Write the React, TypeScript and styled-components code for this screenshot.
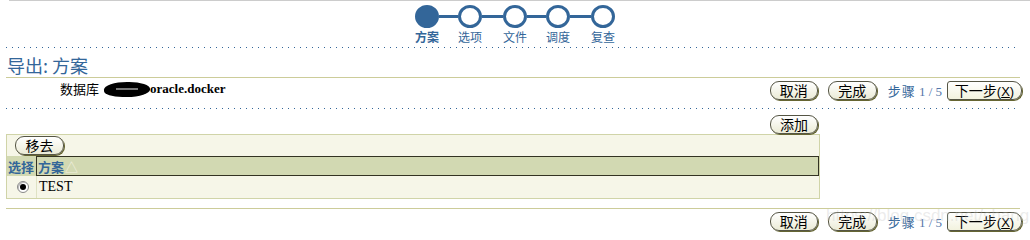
import React from 'react';
import styled, { createGlobalStyle } from 'styled-components';

const GlobalStyle = createGlobalStyle`
  body {
    margin: 0;
    background: #ffffff;
    font-family: "Liberation Serif", "Noto Sans CJK SC", serif;
    font-size: 13px;
    color: #000000;
  }
`;

const Page = styled.div`
  width: 1030px;
  height: 240px;
  position: relative;
  overflow: hidden;
`;

const TopRule = styled.div`
  height: 1px;
  margin-left: 9px;
  background: #cccccc;
`;

const Train = styled.div`
  display: flex;
  justify-content: center;
  padding-top: 4px;
  height: 43px;
  box-sizing: border-box;
`;

const Step = styled.div`
  display: flex;
  flex-direction: column;
  align-items: center;
  width: 24px;
`;

const Dot = styled.div<{ $active?: boolean }>`
  width: 24px;
  height: 24px;
  box-sizing: border-box;
  border-radius: 50%;
  border: 3px solid #336699;
  background: ${p => (p.$active ? '#336699' : '#ffffff')};
`;

const StepLabel = styled.div<{ $active?: boolean }>`
  margin-top: 2px;
  white-space: nowrap;
  font-family: "Noto Sans CJK SC", sans-serif;
  font-size: 12px;
  line-height: 14px;
  color: #336699;
  font-weight: ${p => (p.$active ? 700 : 400)};
`;

const Link = styled.div<{ $w: number }>`
  width: ${p => p.$w}px;
  height: 3px;
  margin-top: 10px;
  background: #336699;
`;

const Dotted = styled.div`
  height: 1px;
  margin: 3px 10px 0 6px;
  background-image: linear-gradient(to right, #336699 1px, transparent 1px);
  background-size: 6px 1px;
  background-repeat: repeat-x;
`;

const Title = styled.h1`
  margin: 6px 0 0 7px;
  font-family: "Noto Sans CJK SC", sans-serif;
  font-size: 18px;
  line-height: 23px;
  font-weight: 400;
  color: #336699;
`;

const BeigeRule = styled.div`
  height: 1px;
  margin: 0 10px 0 6px;
  background: #cccc99;
`;

const InfoRow = styled.div`
  display: flex;
  justify-content: space-between;
  align-items: flex-start;
  height: 27px;
  padding-right: 8px;
`;

const DbInfo = styled.div`
  display: flex;
  align-items: center;
  padding: 3px 0 0 60px;
  font-size: 13px;
  line-height: 16px;
`;

const DbLabel = styled.span`
  font-family: "Noto Sans CJK SC", sans-serif;
  font-size: 13px;
  margin-right: 5px;
`;

const Blot = styled.span`
  display: inline-flex;
  align-items: center;
  justify-content: center;
  width: 46px;
  height: 15px;
  border-radius: 50% 45% 50% 40%;
  background: #000000;
`;

const BlotMark = styled.span`
  width: 22px;
  height: 2px;
  background: #777777;
`;

const Host = styled.b`
  font-family: "Liberation Serif", serif;
  font-size: 13px;
`;

const Actions = styled.div`
  display: flex;
  align-items: center;
  padding-top: 3px;
`;

const Button = styled.button<{ $w: number; $square?: boolean }>`
  width: ${p => p.$w}px;
  height: 19px;
  box-sizing: border-box;
  padding: 0;
  margin: 0;
  border: 1px solid #555544;
  border-radius: ${p => (p.$square ? '3px 9px 9px 3px' : '9px')};
  box-shadow: 1px 1px 0 #666633;
  background: ${p =>
    p.$square ? 'linear-gradient(#ffffff, #f2f2de)' : 'linear-gradient(#ffffff, #ebebd6)'};
  font-family: "Noto Sans CJK SC", sans-serif;
  font-size: 14px;
  line-height: 17px;
  color: #000000;
  cursor: pointer;
`;

const Accel = styled.span`
  font-family: "Liberation Sans", sans-serif;
  font-size: 13px;
  u {
    text-decoration: underline;
  }
`;

const Gap = styled.span<{ $w: number }>`
  display: inline-block;
  width: ${p => p.$w}px;
`;

const StepCount = styled.span`
  font-family: "Noto Sans CJK SC", sans-serif;
  font-size: 13px;
  letter-spacing: 1px;
  color: #336699;
  white-space: nowrap;
`;

const StepNum = styled.span`
  margin-left: 3px;
  letter-spacing: 0;
  font-family: "Liberation Serif", serif;
  font-size: 13px;
  color: #5577aa;
`;

const AddRow = styled.div`
  display: flex;
  justify-content: flex-end;
  width: 818px;
  padding-top: 6px;
  height: 25px;
  box-sizing: border-box;
`;

const TableBox = styled.div`
  margin-left: 6px;
  width: 814px;
  box-sizing: border-box;
  border: 1px solid #d0d4a8;
  background: #f6f6e8;
`;

const TableTools = styled.div`
  display: flex;
  height: 21px;
  padding: 1px 0 0 8px;
  box-sizing: border-box;
`;

const Grid = styled.div`
  display: grid;
  grid-template-columns: 29px 1fr;
`;

const HeadCell = styled.div<{ $framed?: boolean }>`
  height: 20px;
  display: flex;
  align-items: center;
  padding-left: 1px;
  box-sizing: border-box;
  background: #d2d9b2;
  font-family: "Noto Sans CJK SC", sans-serif;
  font-size: 13px;
  font-weight: 700;
  color: #336699;
  border: ${p => (p.$framed ? '1px solid #333322' : 'none')};
`;

const SortMark = styled.span`
  margin-left: 1px;
  font-weight: 400;
  color: #f2f2e2;
  font-size: 13px;
`;

const BodyCell = styled.div<{ $center?: boolean }>`
  height: 22px;
  display: flex;
  align-items: center;
  justify-content: ${p => (p.$center ? 'center' : 'flex-start')};
  padding-left: ${p => (p.$center ? 0 : 2)}px;
  border-left: ${p => (p.$center ? 'none' : '1px solid #dfe2c4')};
  font-family: "Liberation Serif", serif;
  font-size: 14px;
`;

const Radio = styled.span`
  display: inline-flex;
  align-items: center;
  justify-content: center;
  width: 12px;
  height: 12px;
  box-sizing: border-box;
  border-radius: 50%;
  border: 1px solid #888888;
  box-shadow: inset 1px 1px 0 #bbbbbb;
  background: #ffffff;
  margin-left: 2px;
  &::after {
    content: '';
    width: 6px;
    height: 6px;
    border-radius: 50%;
    background: #000000;
  }
`;

const BottomRule = styled(BeigeRule)`
  margin-top: 9px;
`;

const BottomRow = styled.div`
  display: flex;
  justify-content: flex-end;
  padding: 0 8px 0 0;
`;

const Watermark = styled.div`
  position: absolute;
  left: 826px;
  top: 206px;
  font-family: "Liberation Sans", sans-serif;
  font-size: 17px;
  color: rgba(190, 190, 190, 0.3);
  pointer-events: none;
  white-space: nowrap;
`;

const steps = ['方案', '选项', '文件', '调度', '复查'];
const gaps = [19, 21, 19, 21];

const NavActions: React.FC = () => (
  <Actions>
    <Button $w={48}>取消</Button>
    <Gap $w={10} />
    <Button $w={49}>完成</Button>
    <Gap $w={11} />
    <StepCount>
      步骤<StepNum>1 / 5</StepNum>
    </StepCount>
    <Gap $w={5} />
    <Button $w={75} $square>
      下一步<Accel>(<u>X</u>)</Accel>
    </Button>
  </Actions>
);

const App: React.FC = () => {
  return (
    <Page>
      <GlobalStyle />
      <TopRule />
      <Train>
        {steps.map((s, i) => (
          <React.Fragment key={s}>
            {i > 0 && <Link $w={gaps[i - 1]} />}
            <Step>
              <Dot $active={i === 0} />
              <StepLabel $active={i === 0}>{s}</StepLabel>
            </Step>
          </React.Fragment>
        ))}
      </Train>
      <Dotted />
      <Title>导出: 方案</Title>
      <BeigeRule />
      <InfoRow>
        <DbInfo>
          <DbLabel>数据库</DbLabel>
          <Blot>
            <BlotMark />
          </Blot>
          <Host>oracle.docker</Host>
        </DbInfo>
        <NavActions />
      </InfoRow>
      <Dotted />
      <AddRow>
        <Button $w={48}>添加</Button>
      </AddRow>
      <TableBox>
        <TableTools>
          <Button $w={49}>移去</Button>
        </TableTools>
        <Grid>
          <HeadCell>选择</HeadCell>
          <HeadCell $framed>
            方案<SortMark>△</SortMark>
          </HeadCell>
          <BodyCell $center>
            <Radio />
          </BodyCell>
          <BodyCell>TEST</BodyCell>
        </Grid>
      </TableBox>
      <BottomRule />
      <BottomRow>
        <NavActions />
      </BottomRow>
      <Watermark>https://blog.csdn.net/shangruwei</Watermark>
    </Page>
  );
};

export default App;
